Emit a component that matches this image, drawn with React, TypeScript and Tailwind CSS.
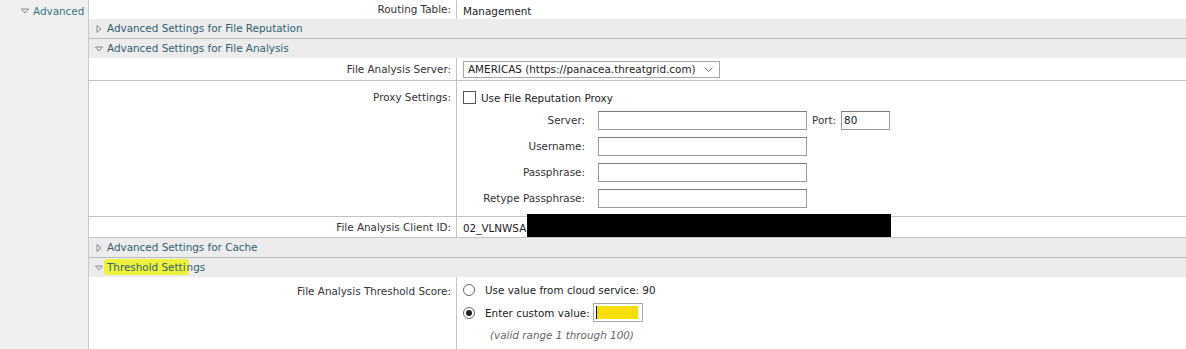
import React from "react";

const RightTri = () => (
  <svg width="6" height="8" viewBox="0 0 6 8" className="shrink-0">
    <path d="M1 0.5 L5 4 L1 7.5 Z" fill="none" stroke="#8a8a8a" strokeWidth="1" />
  </svg>
);

const DownTri = () => (
  <svg width="8" height="6" viewBox="0 0 8 6" className="shrink-0">
    <path d="M0.5 1 L7.5 1 L4 5 Z" fill="none" stroke="#8a8a8a" strokeWidth="1" />
  </svg>
);

function Header({ open, children, border }: { open?: boolean; children: React.ReactNode; border?: boolean }) {
  return (
    <div
      className={`h-[19px] bg-[#ececec] flex items-center gap-[4px] pl-[6px] text-[#2f5f70] ${
        border ? "border-b border-[#bcbcbc] h-[20px]" : ""
      }`}
    >
      <div className="w-[8px] flex justify-center">{open ? <DownTri /> : <RightTri />}</div>
      <span className="whitespace-nowrap">{children}</span>
    </div>
  );
}

function Row({
  label,
  children,
  className = "",
  labelClass = "items-center",
}: {
  label: string;
  children: React.ReactNode;
  className?: string;
  labelClass?: string;
}) {
  return (
    <div className={`flex ${className}`}>
      <div className={`w-[367px] shrink-0 flex justify-end pr-[5px] text-[#333] whitespace-nowrap ${labelClass}`}>{label}</div>
      <div className="flex-1 border-l border-[#c4c4c4] pl-[6px] relative">{children}</div>
    </div>
  );
}

function TextInput({ w, value }: { w: string; value?: string }) {
  return (
    <div className={`${w} h-[19px] border border-[#9a9a9a] border-t-[#7a7a7a] bg-white flex items-center pl-[2px] text-[#222]`}>
      {value}
    </div>
  );
}

export default function App() {
  return (
    <div className="w-[1186px] h-[349px] overflow-hidden bg-white flex font-['DejaVu_Sans',sans-serif] text-[10.4px] leading-none">
      <aside className="w-[89px] shrink-0 bg-[#f0f0f0] border-r border-[#c8c8c8] pt-[6px] pl-[21px] text-[#3a7283] flex gap-[4px] items-start whitespace-nowrap">
        <div className="pt-[2px]">
          <DownTri />
        </div>
        <span>Advanced</span>
      </aside>
      <main className="flex-1 flex flex-col">
        <Row label="Routing Table:" className="h-[19px]">
          <div className="h-full flex items-center pt-[3px] text-[#222]">Management</div>
        </Row>
        <Header border>Advanced Settings for File Reputation</Header>
        <Header open>Advanced Settings for File Analysis</Header>
        <Row label="File Analysis Server:" className="h-[23px] border-b border-[#c4c4c4]">
          <div className="h-full flex items-center">
            <div className="w-[257px] h-[17px] border border-[#a6a6a6] bg-white flex items-center pl-[4px] pr-[6px] text-[#222] whitespace-nowrap">
              <span>AMERICAS (https://panacea.threatgrid.com)</span>
              <svg width="9" height="6" viewBox="0 0 9 6" className="ml-auto mt-[2px]">
                <path d="M0.5 0.5 L4.5 4.5 L8.5 0.5" fill="none" stroke="#777" strokeWidth="1" />
              </svg>
            </div>
          </div>
        </Row>
        <Row label="Proxy Settings:" className="h-[136px] border-b border-[#c4c4c4]" labelClass="items-start pt-[11px]">
          <div className="pt-[10px] flex items-center gap-[5px] text-[#222]">
            <div className="w-[13px] h-[13px] border border-[#555] bg-white" />
            <span className="pt-[2px]">Use File Reputation Proxy</span>
          </div>
          <div className="grid grid-cols-[122px_auto] gap-x-[13px] gap-y-[7px] mt-[7px] items-center text-[#333]">
            <div className="text-right whitespace-nowrap">Server:</div>
            <div className="flex items-center">
              <TextInput w="w-[209px]" />
              <span className="ml-[5px] mr-[5px]">Port:</span>
              <TextInput w="w-[49px]" value="80" />
            </div>
            <div className="text-right whitespace-nowrap">Username:</div>
            <TextInput w="w-[209px]" />
            <div className="text-right whitespace-nowrap">Passphrase:</div>
            <TextInput w="w-[209px]" />
            <div className="text-right whitespace-nowrap">Retype Passphrase:</div>
            <TextInput w="w-[209px]" />
          </div>
        </Row>
        <Row label="File Analysis Client ID:" className="h-[21px] border-b border-[#c4c4c4]">
          <div className="h-full flex items-center pt-[2px] text-[#222]">02_VLNWSA</div>
          <div className="absolute left-[70px] top-[-3px] w-[364px] h-[23px] bg-black" />
        </Row>
        <Header border>Advanced Settings for Cache</Header>
        <div className="h-[19px] bg-[#ececec] flex items-center gap-[4px] pl-[6px] text-[#2f5f70]">
          <div className="w-[8px] flex justify-center">
            <DownTri />
          </div>
          <span className="whitespace-nowrap">
            <span className="bg-[#eef23c] rounded-[3px] -ml-[3px] pl-[3px] pr-[3px] -mr-[2px] py-[2px]">Threshold Setti</span>
            ngs
          </span>
        </div>
        <Row label="File Analysis Threshold Score:" className="flex-1" labelClass="items-start pt-[9px]">
          <div className="flex flex-col text-[#222]">
            <div className="flex items-center pt-[7px]">
              <div className="w-[12px] h-[12px] rounded-full border border-[#666] bg-white" />
              <span className="ml-[10px] pt-[1px]">Use value from cloud service: 90</span>
            </div>
            <div className="flex items-center mt-[7px]">
              <div className="w-[12px] h-[12px] rounded-full border border-[#666] bg-white flex items-center justify-center">
                <div className="w-[6px] h-[6px] rounded-full bg-[#222]" />
              </div>
              <span className="ml-[10px] pt-[1px]">Enter custom value:</span>
              <div className="ml-[3px] w-[50px] h-[19px] border border-[#aaa] bg-white flex items-center pl-[2px]">
                <div className="w-[1px] h-[13px] bg-black" />
                <div className="w-[41px] h-[13px] bg-[#f7e000]" />
              </div>
            </div>
            <div className="pl-[27px] mt-[8px] italic text-[#666]">(valid range 1 through 100)</div>
          </div>
        </Row>
      </main>
    </div>
  );
}
